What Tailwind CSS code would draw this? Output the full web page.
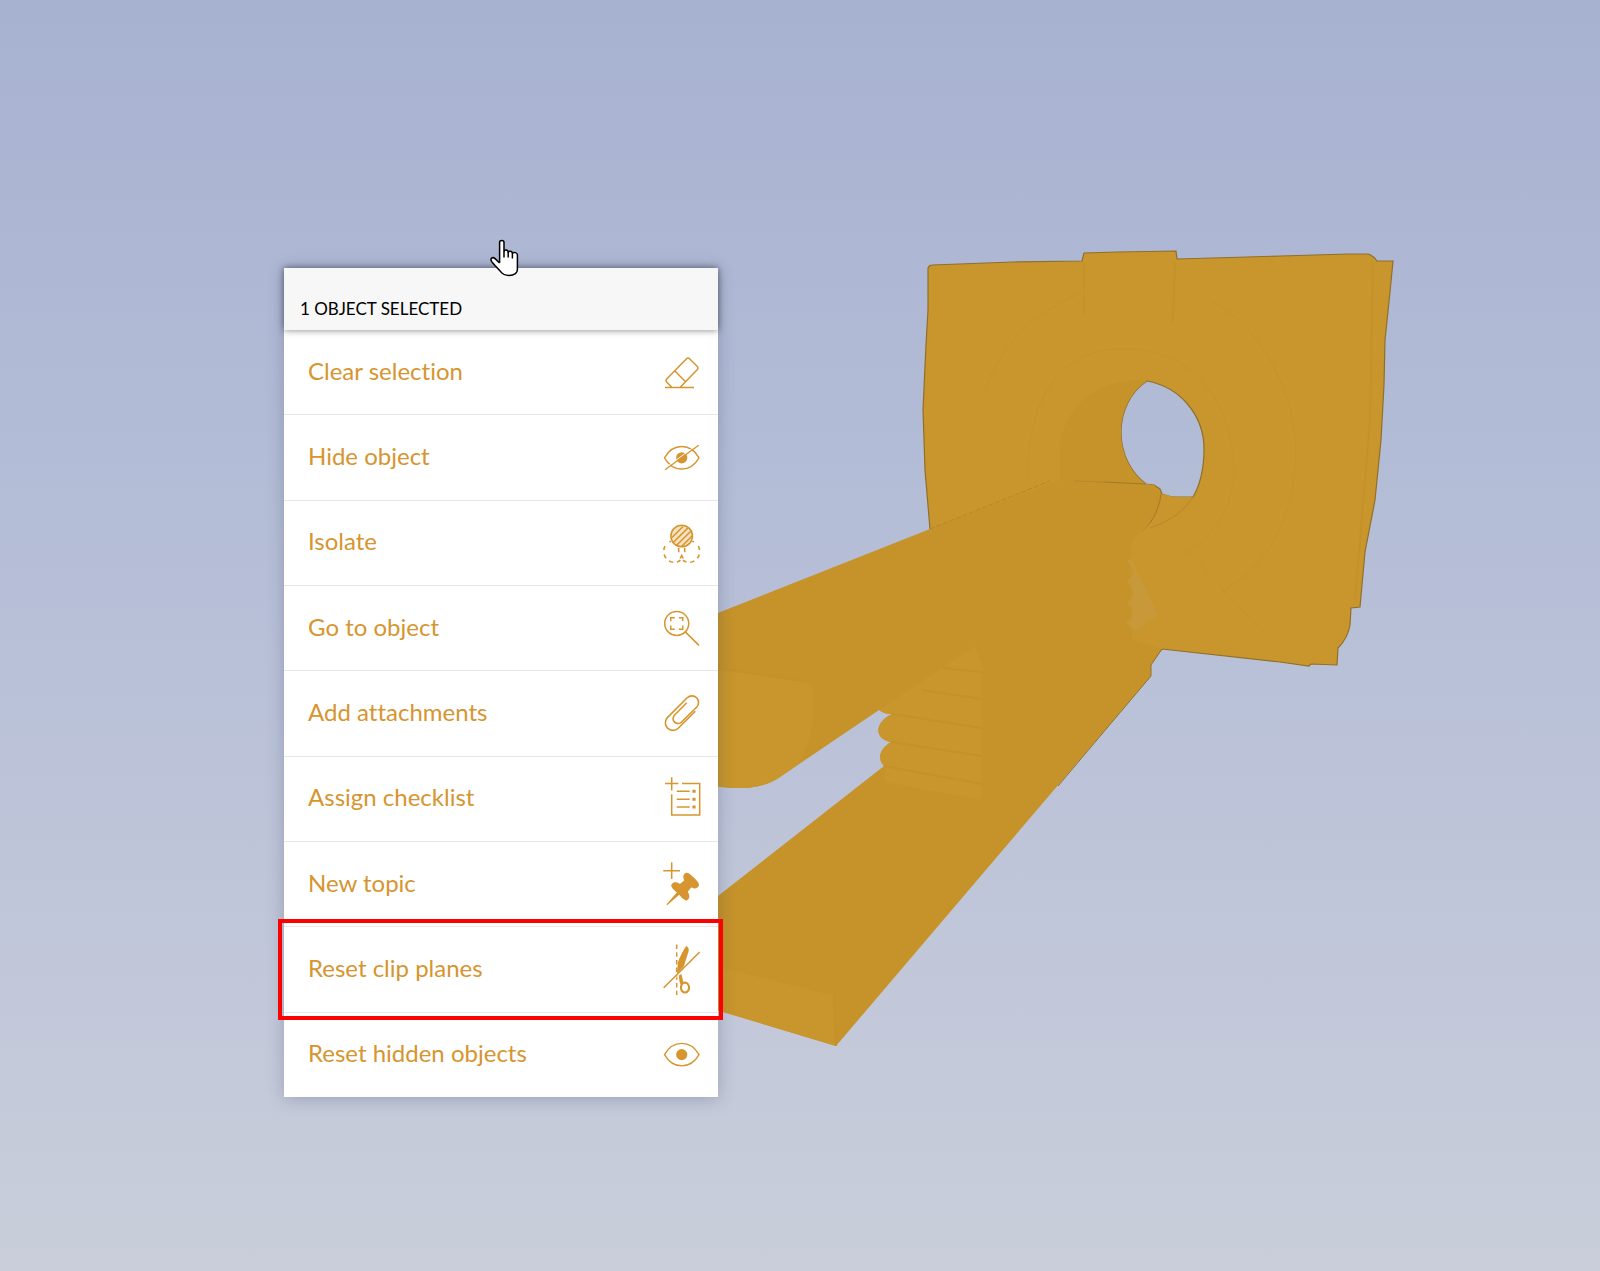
<!DOCTYPE html>
<html lang="en">
<head>
  <meta charset="UTF-8" />
  <meta name="viewport" content="width=device-width, initial-scale=1.0" />
  <title>Model viewer</title>
  <script src="https://cdn.jsdelivr.net/npm/@tailwindcss/browser@4"></script>
</head>
<body class="font-['Lato','Noto_Sans',sans-serif]">

  <main class="relative min-h-screen overflow-hidden bg-linear-to-b from-[#a7b2d1] via-[#b8c0d8] to-[#c9ceda]">

    <!-- 3D scene -->
    <svg class="absolute inset-0 h-full w-full" viewBox="0 0 1600 1271" preserveAspectRatio="xMinYMin slice" role="img" aria-label="3D model with one selected object">
      <!-- gantry, with the bore cut out -->
      <path fill="#c8962c" stroke="#8f7029" stroke-width="1.2" fill-rule="evenodd" d="M928 268 Q929 265 932 265 L1013 262 L1082 261 L1084 253 L1117 252 L1176 251 L1177 259 L1213 258 L1281 256 L1348 254 L1368 254 Q1374 256 1377 261 L1393 261 L1390 292 L1385 340 L1384 385 L1381 440 L1375 500 L1365 552 L1360 607 L1351 608 L1350 625 Q1348 638 1338 648 L1337 665 L1311 664 L1309 666 L1280 662 L1162 649 L1100 700 L960 600 L930 529 L925 470 L923 410 L926 345 L928 310 Z
        M1147 381 C1130 392 1121 412 1121 432 C1121 454 1131 473 1146 484 L1154 485 L1160 489 L1162 494 Q1170 497 1175 497 L1193 497 C1200 485 1204 470 1204 449 C1204 415 1180 387 1147 381 Z" />
      <!-- inner wall of the bore -->
      <path fill="#c6932b" d="M1147 381 C1100 376 1060 405 1060 455 L1060 482 L1146 484 C1131 473 1121 454 1121 432 C1121 412 1130 392 1147 381 Z" />
      <!-- table and base -->
      <path fill="#c6932b" d="M700 620 L930 529 L1060 480 L1146 484 L1154 485 L1161 494 L1162 649 L1151 665 L1151 676 L836 1046 L700 1005 L700 910 L884 766 C878 760 878 750 891 742 C876 740 872 724 892 714 C885 714 882 712 879 710 L780 777 Q763 789 735 788 Q720 788 700 783 Z" />
      <path fill="#c8962c" d="M1162 494 Q1160 520 1138 533 L1130 545 L1132 640 L1162 649 L1200 600 L1200 510 L1193 497 L1175 497 Z" />
      <path fill="#c8962c" d="M700 667 L810 683 Q815 688 814 710 Q813 735 800 763 L780 777 Q763 789 735 788 L700 783 Z" />
      <path fill="#c8962c" d="M975 646 L982 665 L982 800 L885 782 L884 766 C878 760 878 750 891 742 C876 740 872 724 892 714 C885 714 882 712 879 710 Z" />
      <path fill="#c8962c" d="M722 968 L834 996 L836 1046 L700 1005 Z" />
      <path fill="none" stroke="#c4912a" stroke-width="2" d="M922 690 L982 699 M892 714 L982 728 M891 742 L982 756 M884 766 L982 784 M942 668 L982 672 M834 996 L836 1046 M718 668 L810 682 M1084 262 L1084 315 M1175 262 L1173 322 M1373 262 L1370 420 L1355 600" />
      <path fill="none" stroke="#b5862b" stroke-width="1" stroke-dasharray="5 2" d="M930 529 L1050 481" />
      <path fill="none" stroke="#a27a29" stroke-width="1" d="M1104 482 L1146 484 M1161 494 Q1159 510 1150 523" />
      <path fill="none" stroke="#b8882a" stroke-width="1" d="M1074 481 L1104 482 M1150 523 L1143 531 M1193 497 Q1180 518 1150 528" />
      <path fill="none" stroke="#8f7029" stroke-width="1" d="M1162 649 L1151 665 L1151 676 L1058 786" />
      <path fill="none" stroke="#c5932a" stroke-width="1" d="M1028 480 C1026 400 1060 350 1120 349 C1190 345 1232 400 1234 470 C1234 505 1215 535 1185 553 M985 390 Q1010 320 1084 292 M1210 300 C1280 340 1300 420 1295 470 C1290 530 1260 570 1220 593 M1190 553 L1265 635" />
      <!-- gap behind the base -->
      <path fill="#c79938" d="M1131 558 L1158 615 L1135 631 L1126 622 Q1134 618 1133 611 L1127 602 Q1135 598 1133 590 L1127 581 Q1134 575 1133 569 L1127 561 Z" />
    </svg>

    <!-- context menu -->
    <section class="absolute top-[268px] left-[284px] w-[434px] bg-white text-[#d6952f] shadow-[0_2px_16px_rgba(50,60,90,0.28)]">
      <h1 class="relative flex h-[62px] items-end bg-[#f7f7f7] px-4 pb-[9px] text-[17px] leading-6 text-black shadow-[0_0_7px_rgba(0,0,0,0.5)]">1 OBJECT SELECTED</h1>

      <ul class="flex min-h-[767px] flex-col divide-y divide-[#e6e6e6] text-2xl [font-variant-ligatures:none]">
        <li class="flex flex-1">
          <button type="button" class="flex flex-1 items-center justify-between pr-[17px] pl-6">
            <span class="pb-[3px]">Clear selection</span>
            <svg class="h-[52px] w-10" viewBox="0 0 40 52" fill="none" stroke="currentColor" stroke-width="1.5" aria-hidden="true">
              <path d="M4 41.5H33M11 41.5L5.7 36.1Q4.3 34.5 5.7 33L25.5 12.7Q27 11.3 28.5 12.7L36.4 20.4Q37.7 21.9 36.4 23.5L19 41.5M14 25L24.3 35.5" />
            </svg>
          </button>
        </li>
        <li class="flex flex-1">
          <button type="button" class="flex flex-1 items-center justify-between pr-[17px] pl-6">
            <span class="pb-[3px]">Hide object</span>
            <svg class="h-[52px] w-10" viewBox="0 0 40 52" fill="none" stroke="currentColor" stroke-width="1.4" aria-hidden="true">
              <path d="M3.5 26.8C12 11.8 29.5 11.8 38 26.8C29.5 41.8 12 41.8 3.5 26.8Z" />
              <circle cx="20.7" cy="26.8" r="5.6" fill="currentColor" stroke="none" />
              <path stroke="#fff" stroke-width="1" d="M3.4 37.6L37 13.1" />
              <path d="M4 38.8L37.7 14.3" />
            </svg>
          </button>
        </li>
        <li class="flex flex-1">
          <button type="button" class="flex flex-1 items-center justify-between pr-[17px] pl-6">
            <span class="pb-[3px]">Isolate</span>
            <svg class="h-[52px] w-10" viewBox="0 0 40 52" fill="none" stroke="currentColor" stroke-width="1.6" aria-hidden="true">
              <!-- two dashed neighbours below the hatched circle -->
              <path d="M8.5 25.2L10 24M4.1 29.2Q3 31 2.9 33M3.2 37.5Q3.7 39.5 5 41.2M8 43.8Q10 45.1 12.2 45.3M16 45Q18 44.5 19.4 43.2M17.7 31V35.2" />
              <path d="M32.9 25.2L31.4 24M37.3 29.2Q38.4 31 38.5 33M38.2 37.5Q37.7 39.5 36.4 41.2M33.4 43.8Q31.4 45.1 29.2 45.3M25.4 45Q23.4 44.5 22 43.2M23.7 31V35.2M19.2 41.5L20.7 38.5L22.2 41.5" />
              <circle cx="20.7" cy="19" r="10.8" fill="#f6e2c0" stroke-width="1.5" />
              <path d="M11 20.5L22 9.5M12.2 25.5L27.5 10.4M15.6 28.3L30.3 13.8M20.5 29.5L31.3 18.8" stroke-width="1.5" />
            </svg>
          </button>
        </li>
        <li class="flex flex-1">
          <button type="button" class="flex flex-1 items-center justify-between pr-[17px] pl-6">
            <span class="pb-[3px]">Go to object</span>
            <svg class="h-[52px] w-10" viewBox="0 0 40 52" fill="none" stroke="currentColor" stroke-width="1.5" aria-hidden="true">
              <circle cx="15.7" cy="21.4" r="12" />
              <path d="M24.3 29.9L38 43.4M9.7 19.2V15.7H13.7M17.9 15.7H21.7V19.2M21.7 23.6V27.2H17.9M13.7 27.2H9.7V23.6" />
            </svg>
          </button>
        </li>
        <li class="flex flex-1">
          <button type="button" class="flex flex-1 items-center justify-between pr-[17px] pl-6">
            <span class="pb-[3px]">Add attachments</span>
            <svg class="h-[52px] w-10" viewBox="0 0 40 52" fill="none" stroke="currentColor" stroke-width="1.6" aria-hidden="true">
              <path d="M34.3 24.2L17.2 41.2A7.5 7.5 0 0 1 6.6 30.4L26.2 10.8A6.6 6.6 0 0 1 35.6 20.2L20.6 35A4.8 4.8 0 0 1 13.4 28.2L25.7 15.8" />
            </svg>
          </button>
        </li>
        <li class="flex flex-1">
          <button type="button" class="flex flex-1 items-center justify-between pr-[17px] pl-6">
            <span class="pb-[3px]">Assign checklist</span>
            <svg class="h-[52px] w-10" viewBox="0 0 40 52" fill="none" stroke="currentColor" stroke-width="1.5" aria-hidden="true">
              <path d="M4 10.6H17.3M10.7 4.2V17.6M21 10.6H38.7V41.9H10.7V21.2M15.7 18.3H28.7M15.7 26.2H28.7M15.7 33.9H28.7" />
              <path stroke-width="3" d="M31.4 18.3H34.6M31.4 26.2H34.6M31.4 33.9H34.6" />
            </svg>
          </button>
        </li>
        <li class="flex flex-1">
          <button type="button" class="flex flex-1 items-center justify-between pr-[17px] pl-6">
            <span class="pb-[3px]">New topic</span>
            <svg class="h-[52px] w-10" viewBox="0 0 40 52" fill="none" stroke="currentColor" stroke-width="1.5" aria-hidden="true">
              <path d="M2.3 12.7H19M10.7 4.3V21" />
              <g transform="translate(6 46.7) rotate(45)" fill="currentColor" stroke="none">
                <path d="M0 0.4L-0.6 0L-1.7 -15.6Q-7 -14.6 -9.8 -16C-12 -17.2 -11.4 -20.6 -9.4 -22.2Q-7.8 -23.4 -5.6 -23.8L-5 -29.6C-9 -30.4 -10.4 -34 -8.8 -36.4Q-8 -37.6 -6 -37.8Q0 -38.6 6.2 -37.8Q8.4 -37.4 9 -36C10.4 -33.4 9 -30.4 5 -29.6L5.6 -23.8Q7.8 -23.4 9.4 -22.2C11.4 -20.6 12 -17.2 9.8 -16Q7 -14.6 1.7 -15.6L0.6 0Z" />
              </g>
            </svg>
          </button>
        </li>
        <li class="relative flex flex-1">
          <button type="button" class="flex flex-1 items-center justify-between pr-[17px] pl-6">
            <span class="pb-[3px]">Reset clip planes</span>
            <svg class="h-[52px] w-10" viewBox="0 0 40 52" fill="none" stroke="currentColor" stroke-width="1.5" aria-hidden="true">
              <path stroke-dasharray="4.5 3.2" d="M15.7 1.5V52" />
              <path fill="currentColor" stroke="none" d="M25.2 3.1C27.3 4 28.2 6.2 27.6 8.2L22.8 23.4L16 30.8L16.8 19.5Q20.6 9.6 25.2 3.1ZM17.8 32.5L20.4 31L22.4 39.4L20 43Q18 39 17.8 32.5Z" />
              <ellipse cx="24" cy="44.6" rx="4" ry="4.9" stroke-width="2.2" />
              <path stroke="#fff" stroke-width="1" d="M3.6 45.8L39.6 10.1" />
              <path d="M2.7 44.7L38.7 9" />
            </svg>
          </button>
          <!-- callout frame -->
          <span class="pointer-events-none absolute -top-2 -right-[5px] -bottom-2 -left-[6px] border-4 border-[#ff0000]"></span>
        </li>
        <li class="flex flex-1">
          <button type="button" class="flex flex-1 items-center justify-between pr-[17px] pl-6">
            <span class="pb-[3px]">Reset hidden objects</span>
            <svg class="h-[52px] w-10" viewBox="0 0 40 52" fill="none" stroke="currentColor" stroke-width="1.4" aria-hidden="true">
              <path d="M3.5 25.6C12 10.6 29.5 10.6 38 25.6C29.5 40.6 12 40.6 3.5 25.6Z" />
              <circle cx="20.7" cy="25.6" r="5.6" fill="currentColor" stroke="none" />
            </svg>
          </button>
        </li>
      </ul>
    </section>

    <!-- pointer -->
    <svg class="absolute top-[239px] left-[489px] h-[38px] w-[31px]" viewBox="0 0 31 38" fill="#fff" stroke="#000" stroke-width="1.5" stroke-linejoin="round" aria-hidden="true">
      <path d="M10.6 24V3.6C10.6 .9 15 .9 15 3.6V12C16 10.4 18.8 10.8 19.2 13C20.4 11.6 23 12.2 23.4 14.2C25 12.8 28.4 13.4 28.4 16V30.5Q28.4 33 26.4 34.6Q24 36.4 20 36.4Q14.5 36.4 11.6 32.6L6 26.5L2.6 22.4C.6 19.6 3.6 17.6 5.8 19.4L10.6 24" />
      <path fill="none" d="M15 12V18.5M19.2 13V18.5M23.4 14.2V19.5" />
    </svg>

  </main>

</body>
</html>
